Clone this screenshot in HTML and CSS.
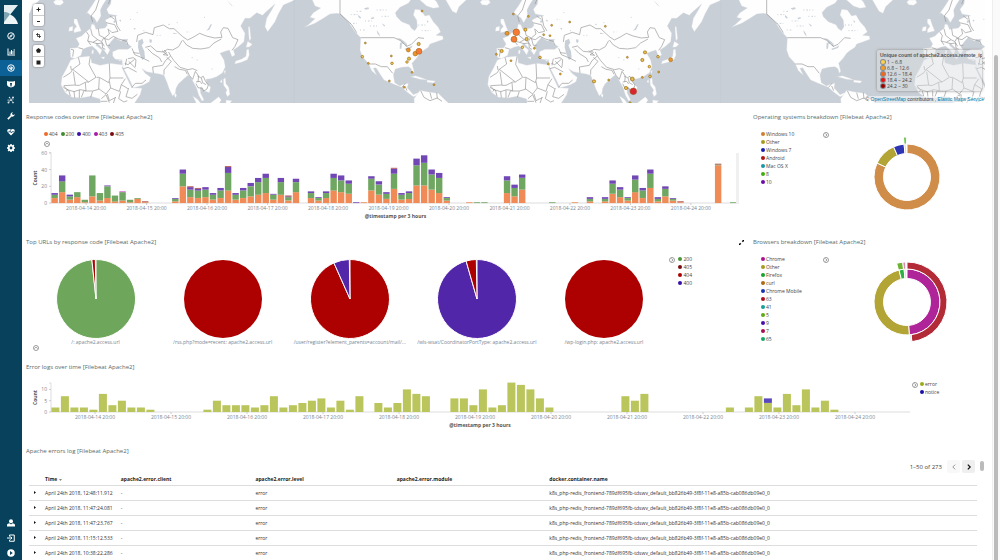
FILE: index.html
```html
<!DOCTYPE html>
<html lang="en">
<head>
<meta charset="utf-8">
<title>Filebeat Apache2 Dashboard</title>
<link rel="stylesheet" href="styles.css">
</head>
<body>
<div class="app">
  <nav class="sidebar" aria-label="Main">
    <div class="nav-top">
      <a class="logo" href="#" aria-label="Kibana"><svg viewBox="0 0 14 19"><path fill="#9fc0c5" d="M0 0v17L13.500 0z"/><path fill="#e4eef0" d="M0 0h14L0 17z"/><path fill="#b7d0d6" d="M0 7c5 0 9 4 12 11L0 19z"/><path fill="#7fa5b2" d="M0 7v10L6 9C4 7.500 2 7 0 7z"/><path fill="#eef5f6" d="M6 9.500L0 17.500V19h14C13 15 10 11 6 9.500z"/></svg></a>
      <a class="nav-item" href="#" aria-label="Discover"><svg viewBox="0 0 16 16"><circle cx="8" cy="8" r="6.500" fill="none" stroke="#fff" stroke-width="2"/><path d="M12 4L9.500 9.500 4 12l2.500-5.500z"/><circle cx="8" cy="8" r="1" fill="#07415c"/></svg></a>
      <a class="nav-item" href="#" aria-label="Visualize"><svg viewBox="0 0 16 16"><path d="M1 1h2v12h13v2H1zM5 7h2v5H5zM8 4h2v8H8zM11 6h1.500v6H11zM13.500 2H15v10h-1.500z"/></svg></a>
      <a class="nav-item active" href="#" aria-label="Dashboard"><svg viewBox="0 0 16 16"><circle cx="8" cy="8" r="6.500" fill="none" stroke="#fff" stroke-width="2"/><path d="M4 9a4 4 0 018 0h-2L6 5l2 5.500z"/><circle cx="8.500" cy="10" r="2"/></svg></a>
      <a class="nav-item" href="#" aria-label="Timelion"><svg viewBox="0 0 16 16"><path d="M0 2l4 1h8l4-1v7c0 3-4 5-8 6-4-1-8-3-8-6z"/><path fill="#07415c" d="M6 6h4l-1 7H7z"/></svg></a>
      <a class="nav-item" href="#" aria-label="Machine Learning"><svg viewBox="0 0 16 16" opacity=".85"><path d="M2 14L13 2M5 3l7 10M2 8l6 1 5-2" stroke="#fff" fill="none"/><circle cx="12" cy="3" r="2"/><circle cx="5" cy="3" r="1.500"/><circle cx="3" cy="13" r="2"/><circle cx="12" cy="13" r="1.700"/><circle cx="8" cy="8" r="1.700"/><circle cx="2" cy="8" r="1.200"/></svg></a>
      <a class="nav-item" href="#" aria-label="Dev Tools"><svg viewBox="0 0 16 16"><path d="M15.500 4a5 5 0 01-6.500 5l-6 6.500L.500 13 7 7a5 5 0 015-6.500L10 3l1 2.500 2.500.500z"/></svg></a>
      <a class="nav-item" href="#" aria-label="Monitoring"><svg viewBox="0 0 16 16"><path d="M8 15L1 8C-1 4 3 0 8 3.500 13 0 17 4 15 8z"/><path d="M1 8h4l1.500-3 2 5L10 7.500h5" stroke="#07415c" stroke-width="1.500" fill="none"/></svg></a>
      <a class="nav-item" href="#" aria-label="Management"><svg viewBox="0 0 16 16"><circle cx="8" cy="8" r="4.500" fill="none" stroke="#fff" stroke-width="3.500"/><path d="M8 0v16M0 8h16M2.300 2.300l11.400 11.400M13.700 2.300L2.300 13.700" stroke="#fff" stroke-width="3"/><circle cx="8" cy="8" r="2.800" fill="#07415c"/></svg></a>
    </div>
    <div class="nav-bottom">
      <a class="nav-item" href="#" aria-label="User"><svg viewBox="0 0 16 16"><circle cx="8" cy="4.500" r="4"/><path d="M0 15v-3c0-2 3-3 5-3.500L8 11l3-2.500c2 .500 5 1.500 5 3.500v3z"/></svg></a>
      <a class="nav-item" href="#" aria-label="Logout"><svg viewBox="0 0 16 16" fill="none" stroke="#fff" stroke-width="2"><path d="M5 5V2h9.500v12.500H5v-3M0 8h10M7 5l3 3-3 3"/></svg></a>
      <a class="nav-item" href="#" aria-label="Expand"><svg viewBox="0 0 16 16"><circle cx="8" cy="8" r="7.500"/><path fill="#07415c" d="M6 4l5.500 4L6 12z"/></svg></a>
    </div>
  </nav>

  <main class="content">
    <section class="map" aria-label="Unique IPs map">
      <svg class="world" viewBox="29 0 956 103" preserveAspectRatio="xMinYMin slice">
        <defs>
          <g id="earth">
            <g class="land">
              <path d="M212 172L210 145 232 143 238 132 228 115 245 108 258 95 272 85 275 72 283 74 288 88 315 84 322 76 316 60 335 50 352 47 326 42 320 28 332 12 334 -4 884 -4 880 2 850 15 835 42 825 65 803 95 795 80 800 55 815 30 825 12 795 38 788 46 770 38 750 55 735 55 722 78 735 100 732 125 715 140 700 150 705 165 696 170 688 150 672 155 660 160 665 168 672 180 676 200 668 218 650 230 632 236 618 238 620 250 632 262 628 278 612 272 606 262 600 262 602 280 612 300 606 303 596 285 590 265 582 250 572 232 565 225 550 238 535 252 528 265 526 280 518 288 508 268 500 245 492 226 478 222 455 218 440 215 426 206 436 220 452 232 448 245 430 255 400 264 390 242 376 215 368 200 366 180 346 178 338 168 338 155 355 148 384 148 395 140 378 128 384 118 368 118 365 124 352 118 345 112 334 124 322 140 330 150 322 165 312 150 300 138 290 128 288 136 306 150 300 165 290 150 276 138 262 142 248 148 243 166 225 176Z"/>
              <path d="M258 42l17-24 15-24 32 0-14 22-7 14 2 18-12 20-8-14-12-8-8-8z"/>
              <path d="M212 180l24-8 36-4 3 20 25 8 30-6 40 5-4 8 18 38 11 22 31 2-6 20-20 30-98 0-2-18-28-8-30 5-26-2-20-14-13-24 3-24 14-25z"/>
              <path d="M222 98l22-5-8-20-5-16-9 0 0 12 8 10-8 10zM206 94l12-2 1-13-11 3zM160 6l6 8 15 2 10-8-4-8-20 0zM302 172l12-2-2 8zM276 150l5 1-1 10-5 0zM355 180l12 0-8 3z"/>
              <path d="M704 192l3-9 18-6 13-8 2-20 6-2 2 18-6 14-18 8zM738 142l5-18 14 9-9 8zM745 80l4 0 4 36-5 6-2-20zM660 246l5-8 2 10zM672 214l5-3-2 12zM670 238l6-5 2 18 8 10 4 22-8 7-5-12 4-8-10-14zM525 279l5 6-3 8-4-6zM578 288l14 9 12 15-14 0zM628 312l28-22 8 10-7 12zM678 300l18 2-8 10-10 0z"/>
              <path d="M935 -4L945 18 962 24 940 38 930 52 945 56 925 74 914 82 945 70 970 55 990 42 1010 40 1022 42 1045 65 1065 95 1082 113 1080 150 1087 170 1105 190 1115 212 1130 226 1120 205 1128 203 1140 222 1152 240 1180 252 1205 262 1220 275 1240 290 1255 285 1262 275 1250 280 1240 284 1228 270 1222 264 1225 250 1210 253 1200 258 1184 248 1180 225 1186 207 1205 202 1225 200 1234 206 1238 220 1242 214 1236 190 1250 174 1260 160 1268 153 1285 142 1290 132 1310 125 1330 118 1328 108 1308 106 1322 96 1315 82 1300 65 1288 45 1275 48 1262 30 1245 28 1240 45 1250 60 1252 80 1244 92 1234 85 1228 74 1205 65 1190 50 1186 38 1200 22 1225 10 1235 -4Z"/>
              <path d="M1255 -4L1280 18 1300 25 1318 22 1310 5 1300 -4ZM1335 -4l22 38 12 6 8-20 26-24zM1232 230l15-3 22 8 13 5-22-2zM1281 240l25 3-5 6-20-2zM1243 312l-1-16 18-25 25 5 30 4 18 18 16 14z"/>
            </g>
            <g class="water">
              <path d="M415 122l12-6 4 12-6 8 8 18 2 20-8 6-8-18-5-20zM448 118l8 1-2 10-5-2zM618 92l6-5 8-14 4 0-8 16zM1190 114l12 2 16 12-10 4-6-10zM1200 128l6 0-2 18-5 0zM1212 128l8 2 2 12-6-4zM1214 146l14-4 10-6-4 8-18 6zM340 63l6-3 2 6-6 3zM357 60l6-1-1 7z"/>
              <path d="M1075 45l8 7-2 4-6-5zM1092 25l13-3 2 5-10 2zM1112 54l9-3 2 4-8 3zM1145 70l10 6-2 4zM1130 90l8 11 2 9-8-10zM505 72l5-1v3h-5zM680 0l17 17 8 5-12-6zM520 98l14 3-14 1zM400 84l7 1-2 5zM1280 60l6 5-4 3z"/>
            </g>
            <path class="specks" d="M1070 34h18M1052 44h25M1095 63h20M1110 78h25M1050 70h20M1080 90h14M1130 30h30M1145 49h26M1255 75h22M1265 92h28M390 58h10M410 38h6M430 92h9M470 106h12M530 68h8M560 96h10M612 52h7M635 207h8M575 173h6M590 180h5"/>
            <path class="borders" d="M1020 0v42l35 32 15 24M1082 113h100l18 8 20 18 14-6 20-20 18 2M1106 192l20 0 18 8 18 0 16 20M1206 262l10-12M1215 258l6 14M1262 272l10 20 18 10 22-8 14 10M1290 278l5 18M1310 278l2 18"/>
            <path class="borders" d="M259 95l8 12-4 16 16 4 14-8 12 6 5-10 16 4 14-10 16 8 24 7 4 10M272 86l5 20 16 13M295 86l3 20 16 8 14-12-4-16M318 68l26 6 10 20-18 4-10-10M345 47l6 30 10 16M330 48l14 10M264 123l8 12M279 127l12 4 16-2 6 10M306 126l2 18 8 4M314 114l6 22 10 0M213 148l8 2-3 20M235 143l14 4"/>
            <path class="borders" d="M278 66l-5-18 14-18 10-30M325 12l5-12M410 126l3-20 24-9 22 7 4-21 27-8 18 11 14 0 26 24 15 10 18-9 18-11 20 8 25 6 22-2-4-16 8-13 14 2 14 28 16 6-9 20-9 12M548 120l12 15 18 10 25 2 24-4 15-14 22-12M436 142l16-4 18 16 20 2 12-8 16 2 18-10 10-18M443 146l14 14 22 14 6 12M492 150l8 8-10 6 14 2-18-14M506 156l6 12-16 14-8 14-30 5 2 18M500 172l14 12-10 12-12 14 0 14M512 168l10 14 18 20 24 7 14-3 14 6M524 200l14 8 18 3 6 12M560 210l8 16 10 12 8-24 10 14-2 18M592 228l10 5 8-4 6 14 9 12-4 12-10 6-4-8-13-2-6-12M604 234l4 14 10 6M588 246l12-2 6 8"/>
            <path class="borders" d="M384 176l16-3 8 6-2 22M396 145l8 19 24 10 20 10M400 158l18 2M374 190l10 4 20-16M380 176l-4 20M370 206l14-4 26 14M396 262l10-12 20 0 12-10M386 184l20 20"/>
            <path class="borders" d="M235 172l5 20-22 16-6 10-22 14M214 210l-2-12M218 208l48 38 22-14-14-25-7-14 4-24M328 190l2 44 40 0M330 234l-4 14-28-16-8 0M220 215l6 40-34 2M226 256l12 0 20-10 8 0M256 248l2 24-18-3-18 6-20-6-12-12M298 234l-2 34-18 5-24 0M296 266l22 16 14-18-4-20M332 264l26 10 6-20 12-18M364 254l20 12M362 274l-6 22 16 10 10-4M386 264l-8 26 18 5 16-12M322 282l6 20 20-10M278 274l-6 18M252 272l-8 20M238 270v24M222 274l2 19M206 270l5 18M304 296l14-12 10 24M190 262l13 8M302 304h20M340 310l6-18M198 275l6-8"/>
            <path class="dateline" d="M882 0v310"/>
          </g>
        </defs>
        <rect class="sea" x="0" y="0" width="2000" height="600"/>
        <g transform="scale(.333333)">
          <use href="#earth" x="-1280"/><use href="#earth"/><use href="#earth" x="1280"/><use href="#earth" x="2560"/>
        </g>
        <g id="markers" transform="translate(330 0) scale(.333333)"></g>
      </svg>
      <div class="map-tools">
        <div class="tool-group"><button aria-label="Zoom in"><svg viewBox="0 0 10 10"><path d="M4 1h2v3h3v2H6v3H4V6H1V4h3z"/></svg></button><button aria-label="Zoom out"><svg viewBox="0 0 10 10"><path d="M2 4h6v2H2z"/></svg></button></div>
        <div class="tool-group"><button aria-label="Fit bounds"><svg viewBox="0 0 10 10" fill="none" stroke="#222" stroke-width="1.500"><path d="M3 0v7h7M0 3h7v7"/></svg></button></div>
        <div class="tool-group"><button aria-label="Draw polygon"><svg viewBox="0 0 10 10"><path d="M5 0l5 4-2 5.500H2L0 4z"/></svg></button><button aria-label="Draw rectangle"><svg viewBox="0 0 10 10"><path d="M1 1h8v8H1z"/></svg></button></div>
      </div>
      <div class="map-legend">
        <strong>Unique count of apache2.access.remote_ip</strong>
        <ul>
          <li class="c-yellow">1 – 6.8</li><li class="c-amber">6.8 – 12.6</li><li class="c-orange">12.6 – 18.4</li><li class="c-red">18.4 – 24.2</li><li class="c-dark">24.2 – 30</li>
        </ul>
      </div>
      <p class="attribution">© <a href="#">OpenStreetMap</a> contributors , <a href="#">Elastic Maps Service</a></p>
    </section>

    <div class="row split">
      <section class="panel">
        <h2>Response codes over time [Filebeat Apache2]</h2>
        <ul class="legend inline" data-legend="404:#ee6a2c,200:#3e8e2f,400:#3b0fa8,403:#a81ca8,405:#7d0a10"></ul>
        <button class="toggle below" aria-label="Toggle legend"><svg viewBox="0 0 10 10"><use href="#chev-up"/></svg></button>
        <svg class="chart" id="responses" viewBox="22 149 726 72"></svg>
      </section>
      <section class="panel">
        <h2>Operating systems breakdown [Filebeat Apache2]</h2>
        <div class="donut-body">
          <ul class="legend" data-legend="Windows 10:#cd7f32,Other:#a99a1c,Windows 7:#131fb0,Android:#b01515,Mac OS X:#1796a8,8:#3fae12,10:#6a0da8"></ul>
          <button class="toggle" aria-label="Toggle legend"><svg viewBox="0 0 10 10"><use href="#chev-right"/></svg></button>
          <svg class="donut" id="os" viewBox="-41 -41 82 82"></svg>
        </div>
      </section>
    </div>

    <div class="row split">
      <section class="panel">
        <h2>Top URLs by response code [Filebeat Apache2]</h2>
        <button class="expand" aria-label="Expand panel"><svg viewBox="0 0 10 10"><path d="M6 0h4v4L8.500 2.500l-2 2-1-1 2-2zM4 10H0V6l1.500 1.500 2-2 1 1-2 2z"/></svg></button>
        <div class="pie-body">
          <div class="pies" id="pies"></div>
          <button class="toggle" aria-label="Toggle legend"><svg viewBox="0 0 10 10"><use href="#chev-right"/></svg></button>
          <ul class="legend" data-legend="200:#4a9636,405:#7d0a10,404:#ad0000,400:#3b0fa8"></ul>
        </div>
        <button class="toggle corner" aria-label="Toggle table"><svg viewBox="0 0 10 10"><use href="#chev-up"/></svg></button>
      </section>
      <section class="panel">
        <h2>Browsers breakdown [Filebeat Apache2]</h2>
        <div class="donut-body">
          <ul class="legend" data-legend="Chrome:#aa1090,Other:#a99a1c,Firefox:#14a52a,curl:#b06a10,Chrome Mobile:#1135b0,63:#a8101f,41:#14a098,5:#5cab12,9:#4a0da8,7:#a80d52,65:#12a862"></ul>
          <button class="toggle" aria-label="Toggle legend"><svg viewBox="0 0 10 10"><use href="#chev-right"/></svg></button>
          <svg class="donut" id="browsers" viewBox="-41 -41 82 82"></svg>
        </div>
      </section>
    </div>

    <section class="row panel errors">
      <h2>Error logs over time [Filebeat Apache2]</h2>
      <div class="error-body">
        <svg class="chart" id="errors" viewBox="22 378 890 54"></svg>
        <button class="toggle" aria-label="Toggle legend"><svg viewBox="0 0 10 10"><use href="#chev-right"/></svg></button>
        <ul class="legend" data-legend="error:#9dab1a,notice:#1a0fa8"></ul>
      </div>
    </section>

    <section class="panel log">
      <h2>Apache errors log [Filebeat Apache2]</h2>
      <div class="pager"><span>1–50 of 273</span><button disabled aria-label="Previous page"><svg viewBox="0 0 10 10"><path d="M7 1L3 5l4 4"/></svg></button><button aria-label="Next page"><svg viewBox="0 0 10 10"><path d="M3 1l4 4-4 4"/></svg></button><i class="inner-thumb"></i></div>
      <table>
        <colgroup><col class="w-caret"><col class="w-time"><col class="w-client"><col class="w-level"><col class="w-module"><col></colgroup>
        <thead><tr><th></th><th>Time <svg class="sort" viewBox="0 0 10 6"><path d="M0 0h10L5 6z"/></svg></th><th>apache2.error.client</th><th>apache2.error.level</th><th>apache2.error.module</th><th>docker.container.name</th></tr></thead>
        <tbody id="rows"></tbody>
      </table>
    </section>
  </main>
  <div class="scrollbar"><i></i></div>
</div>
<svg class="defs" aria-hidden="true">
  <g id="chev-up"><circle cx="5" cy="5" r="4.200" fill="none" stroke="#777" stroke-width="1.200"/><path d="M2.500 6L5 3.500 7.500 6" fill="none" stroke="#777" stroke-width="1.200"/></g>
  <g id="chev-right"><circle cx="5" cy="5" r="4.200" fill="none" stroke="#777" stroke-width="1.200"/><path d="M4 2.500L6.500 5 4 7.500" fill="none" stroke="#777" stroke-width="1.200"/></g>
</svg>
<script src="charts.js"></script>
</body>
</html>
```
FILE: styles.css
```css
* { box-sizing: border-box; margin: 0; padding: 0; }
body { font-family: "Open Sans", "Noto Sans", sans-serif; font-size: 5px; line-height: 8px; color: #444; background: #fff; }
button { border: 0; background: none; font: inherit; cursor: pointer; }
ul { list-style: none; }
svg { display: block; }
.defs { position: absolute; width: 0; height: 0; }
.app { display: flex; height: 100vh; overflow: hidden; }

.sidebar { width: 22px; flex: none; background: #07415c; display: flex; flex-direction: column; justify-content: space-between; }
.logo { display: block; padding: 5px 4px 0; height: 28px; }
.logo svg { width: 14px; height: 19px; }
.nav-item { display: flex; align-items: center; justify-content: center; height: 16px; }
.nav-item svg { width: 8px; height: 8px; fill: #fff; }
.nav-item.active { background: #0c6296; }
.nav-bottom .nav-item { height: 15px; }
.nav-bottom .nav-item:nth-child(2) svg { fill: none; }

.content { flex: 1; min-width: 0; }
.scrollbar { width: 8px; flex: none; border-left: 1px solid #eee; background: #fafafa; padding: 55px 2px 0 1px; }
.scrollbar i { display: block; height: 100%; border-radius: 2px 2px 0 0; background: #bbb; }

.map { position: relative; height: 103px; margin: 0 7px; overflow: hidden; }
.world { width: 100%; height: 100%; }
.sea { fill: #c9cfd6; }
.land { fill: #fefefe; stroke: #d8dce1; stroke-width: 1; }
.water { fill: #c8cfd7; }
.specks { fill: none; stroke: #ccd2d9; stroke-width: 3; stroke-dasharray: 3 6 5 4; }
.borders { fill: none; stroke: #959595; stroke-width: 2; stroke-linejoin: round; }
.dateline { stroke: #bcc4cd; stroke-width: 1; }
.map-tools { position: absolute; left: 4px; top: 4px; display: grid; gap: 4px; }
.tool-group { width: 11px; background: #fff; border-radius: 2px; box-shadow: 0 0 2px #666; }
.tool-group button { display: flex; width: 11px; height: 11px; align-items: center; justify-content: center; }
.tool-group button + button { border-top: 1px solid #ccc; }
.tool-group svg { width: 5px; height: 5px; fill: #222; }
.tool-group svg[fill="none"] { fill: none; }
.map-legend { position: absolute; right: 3px; top: 50px; width: 105px; padding: 2px 3px; border-radius: 2px; background: rgba(220, 222, 226, .45); box-shadow: 0 0 3px #888; line-height: 6px; white-space: nowrap; overflow: hidden; color: #444; }
.map-legend strong { display: block; font-family: "Liberation Sans", sans-serif; font-weight: 700; line-height: 7px; color: #555; }
.map-legend li { display: flex; align-items: center; gap: 2px; }
.map-legend li::before { content: ""; width: 4px; height: 4px; border-radius: 50%; background: var(--dot); box-shadow: 0 0 0 1px rgba(0, 0, 0, .35); margin-left: 1px; }
.c-yellow { --dot: #fdd14a; }
.c-amber { --dot: #f89a24; }
.c-orange { --dot: #f4671a; }
.c-red { --dot: #ee1010; }
.c-dark { --dot: #9b0000; }
.attribution { position: absolute; right: 1px; bottom: 0; line-height: 7px; font-family: "Liberation Sans", sans-serif; color: #333; background: rgba(255, 255, 255, .5); }
.attribution a { color: #0078a8; text-decoration: none; }

.map + .row { margin-top: 5px; }
.split { display: grid; grid-template-columns: minmax(0, 727fr) minmax(0, 243fr); height: 125px; }
.panel { position: relative; padding: 4px 4px 0; }
.panel h2 { font-size: 6px; line-height: 10px; font-weight: 400; color: #566b6b; }
.legend { font-size: 5px; line-height: 8px; color: #444; white-space: nowrap; }
.legend li { display: flex; align-items: center; gap: 1px; line-height: 8px; }
.legend li i { width: 4px; height: 4px; border-radius: 50%; background: var(--dot); }
.legend.inline { display: flex; gap: 3px; margin: 8px 0 0 18px; }
.toggle { width: 6px; height: 6px; flex: none; }
.toggle svg { width: 6px; height: 6px; }
.toggle.below { display: block; margin: 3px 0 0 18px; }
.toggle.corner { position: absolute; left: 11px; bottom: 7px; }
.expand { position: absolute; right: 5px; top: 7px; width: 5px; height: 5px; }
.chart { width: 100%; }
#responses { margin: 2px -4px 0; width: calc(100% + 8px); }
.chart text { font-size: 5px; fill: #7a8590; }
.chart .axis-title { font-weight: 700; fill: #555; }
.donut-body { display: flex; padding: 8px 8px 0; align-items: flex-start; }
.donut-body .legend { width: 62px; }
.donut-body .toggle { margin-top: 2px; }
.donut { width: 82px; margin: 6px 0 0 37px; }
.donut path, .pies path { stroke: #fff; stroke-width: 1; }
.pie-body { display: flex; align-items: flex-start; padding: 4px 53px 0 6px; }
.pies { flex: 1; display: grid; grid-template-columns: repeat(5, minmax(0, 1fr)); }
.pies figure { display: grid; justify-items: center; padding-top: 8px; }
.pies svg { width: 80px; height: 80px; }
.pies figcaption { font-size: 5px; line-height: 6px; color: #7a8590; white-space: nowrap; }
.pie-body .toggle { margin: 6px 3px 0 2px; }
.pie-body .legend { margin-top: 4px; }
.errors { height: 84px; }
.error-body { display: flex; align-items: flex-start; margin: 6px 0 0 -4px; }
.error-body .chart { flex: 1; min-width: 0; }
.error-body .toggle { margin: 4px 2px 0 0; }
.error-body .legend { width: 68px; margin-top: 2px; }

.log { padding-right: 0; }
.pager { display: flex; align-items: center; justify-content: flex-end; gap: 2px; height: 13px; margin: 4px 8px 0 0; font-size: 6px; color: #444; }
.pager span { margin-right: 3px; }
.pager button { display: flex; align-items: center; justify-content: center; width: 13px; height: 13px; border-radius: 2px; background: #efefef; }
.pager button:disabled { background: #f8f8f8; }
.pager svg { width: 6px; height: 6px; fill: none; stroke: #111; stroke-width: 2; }
.pager button:disabled svg { stroke: #555; stroke-width: 1; }
.inner-thumb { width: 4px; height: 10px; margin: -2px 0 0 3px; border-radius: 2px; background: #bbb; }
table { width: calc(100% - 18px); margin-left: 3px; table-layout: fixed; border-collapse: collapse; font-size: 5px; }
.w-caret { width: 16px; }
.w-time { width: 8%; }
.w-client { width: 14.2%; }
.w-level { width: 14.9%; }
.w-module { width: 16.1%; }
th { height: 12px; text-align: left; font-weight: 700; color: #222; border-bottom: 1px solid #ddd; vertical-align: middle; white-space: nowrap; }
td { height: 15px; border-bottom: 1px solid #ddd; color: #333; white-space: nowrap; vertical-align: middle; }
td:first-child { padding-left: 5px; }
.sort { display: inline-block; width: 3px; height: 2px; fill: #888; }
.caret { display: block; width: 2px; height: 3px; }
.caret svg { width: 2px; height: 3px; fill: #111; }
```
FILE: charts.js
```js
const el = (html, parent) => parent.insertAdjacentHTML('beforeend', html);

document.querySelectorAll('[data-legend]').forEach(list => {
  list.dataset.legend.split(',').forEach(entry => {
    const [label, color] = entry.split(':');
    el(`<li><i style="--dot:${color}"></i>${label}</li>`, list);
  });
});

/* Stacked histogram: data maps a time slot to the values of each series. */
function histogram(svg, o) {
  let s = '';
  s += `<path d="M${o.x - 2} ${o.top}h2V${o.base}H${o.end}" fill="none" stroke="#ddd"/>`;
  o.ticks.forEach(t => {
    const y = o.base - t * o.unit;
    s += `<path d="M${o.x - 2} ${y}h2" stroke="#ccc"/><text x="${o.x - 4}" y="${y + 2}" text-anchor="end">${t}</text>`;
  });
  for (const slot in o.data) {
    let y = o.base;
    o.data[slot].forEach((v, i) => {
      if (!v) return;
      const h = v * o.unit;
      y -= h;
      s += `<rect x="${(o.x + .4 + slot * o.pitch).toFixed(1)}" y="${y.toFixed(1)}" width="${o.bar}" height="${h.toFixed(1)}" fill="${o.colors[i]}"/>`;
    });
  }
  for (let d = 0; d < 11; d++) {
    s += `<path d="M${o.label + d * o.step} ${o.base}v2" stroke="#ccc"/><text x="${o.label + d * o.step}" y="${o.base + 7}" text-anchor="middle">2018-04-${14 + d} 20:00</text>`;
  }
  s += `<text class="axis-title" text-anchor="middle" transform="translate(37 ${(o.top + o.base) / 2}) rotate(-90)">Count</text>`;
  s += `<text class="axis-title" text-anchor="middle" x="${o.titleX}" y="${o.base + 15}">@timestamp per 3 hours</text>`;
  svg.innerHTML = s;
}

histogram(document.getElementById('responses'), {
  x: 51, end: 738, top: 153, base: 203, unit: .837, pitch: 7.53, bar: 6.4, ticks: [0, 20, 40, 60],
  label: 86, step: 60.4, titleX: 395,
  colors: ['#f08b57', '#6fa661', '#7147b5', '#d050c8', '#a8423f'],
  data: {
    0: [6,4,2], 1: [13,13,7], 2: [4,4,2], 3: [7,6], 4: [1,3], 5: [8,25], 6: [3,9], 7: [6,14,1], 8: [2,7], 9: [3,10,0,1], 10: [1,3], 11: [5,1], 12: [1,0,0,0,1],
    16: [2,3,1], 17: [20,15,5], 18: [7,9,3,0,1], 19: [6,9,2,0,1], 20: [7,9,3], 21: [4,6,2], 22: [6,9,3], 23: [15,21,7,0,1], 24: [4,6,2], 25: [6,9,3], 26: [8,12,4], 27: [10,15,5], 28: [12,18,5], 29: [4,6,1], 30: [10,15,5], 31: [3,4,1,0,1], 32: [13,12,4],
    34: [6,6,2], 35: [3,3,1], 36: [6,6,2], 37: [15,15,5], 38: [13,14,6], 39: [11,12,4], 40: [0,0,1], 41: [1], 42: [15,14,3], 43: [10,12,4], 44: [5,6,2], 45: [17,18,6,0,1], 46: [4,6,2], 47: [5,7,2], 48: [21,24,8], 49: [21,27,9], 50: [16,18,6], 51: [12,18,6], 52: [3,3,1],
    55: [1], 56: [0,1], 57: [0,1], 60: [12,15,5], 61: [8,10,4], 62: [16,14,4], 66: [0,1], 69: [1], 71: [2,3,2], 73: [2,3,2], 74: [11,12,4], 75: [7,9,3], 76: [3,3,1], 77: [13,15,5], 78: [6,9,3], 79: [18,17,5], 80: [2,3,2], 81: [8,9,3], 82: [3,2,1], 83: [1,0,0,0,1], 88: [45,1,0,0,1], 90: [0,1]
  }
});
el('<rect x="735" y="153" width="3" height="50" fill="#f0f0f0"/>', document.getElementById('responses'));

histogram(document.getElementById('errors'), {
  x: 51, end: 910, top: 383, base: 412, unit: 2.26, pitch: 9.5, bar: 8, ticks: [0, 5, 10],
  label: 95, step: 76, titleX: 480,
  colors: ['#bac55c', '#5a48bd'],
  data: {
    0: [2], 1: [7], 2: [2], 3: [2], 4: [1], 5: [8], 6: [3], 7: [5], 8: [2], 9: [2], 10: [1],
    16: [1], 17: [5], 18: [3], 19: [3], 20: [3], 21: [2], 22: [3], 23: [7], 24: [2], 25: [3], 26: [4], 27: [5], 28: [6], 29: [2], 30: [5], 31: [1], 32: [7],
    34: [4], 35: [2], 36: [4], 37: [10], 38: [8], 39: [7], 42: [6], 43: [6], 44: [3], 45: [10], 46: [2], 47: [3], 48: [13], 49: [12], 50: [10], 51: [6], 52: [2],
    60: [7], 61: [5], 62: [8], 71: [2], 73: [2], 74: [7], 75: [4,2], 76: [2], 77: [8], 78: [3], 79: [10], 80: [2], 81: [5], 82: [1]
  }
});

/* Ring segment between two angles, in degrees clockwise from the top. */
function arc(a, b, inner, outer, color) {
  const p = (deg, r) => {
    const t = (deg - 90) * Math.PI / 180;
    return `${(r * Math.cos(t)).toFixed(2)} ${(r * Math.sin(t)).toFixed(2)}`;
  };
  const big = b - a > 180 ? 1 : 0;
  return `<path fill="${color}" d="M${p(a, outer)}A${outer} ${outer} 0 ${big} 1 ${p(b, outer)}L${p(b, inner)}A${inner} ${inner} 0 ${big} 0 ${p(a, inner)}Z"/>`;
}

document.getElementById('os').innerHTML =
  arc(0, 295, 23.5, 33, '#d08d49') + arc(295, 336, 23.5, 33, '#b3a436') + arc(336, 355, 23.5, 33, '#2e35b3') + arc(355, 358, 23.5, 33, '#e3aaa6') + arc(355, 359, 33, 40, '#62bd42');
document.getElementById('browsers').innerHTML =
  arc(0, 176, 23.5, 33, '#b0249a') + arc(176, 346, 23.5, 33, '#b3a436') + arc(346, 355, 23.5, 33, '#2eb045') + arc(355, 358, 23.5, 33, '#e8c9a0') +
  arc(0, 173, 33, 40, '#b22b37') + arc(173, 175, 33, 40, '#9bd8d3') + arc(345, 354, 33, 40, '#6eb333') + arc(354, 358, 33, 40, '#dc8ab0');

const RED = '#ad0000', VIOLET = '#5226a8';
[
  ['/: apache2.access.url', '#6ea65b', 354, RED],
  ['/rss.php?mode=recent: apache2.access.url', RED, 360],
  ['/user/register?element_parents=account/mail/...', RED, 336, VIOLET],
  ['/wls-wsat/CoordinatorPortType: apache2.access.url', VIOLET, 344, RED],
  ['/wp-login.php: apache2.access.url', RED, 360]
].forEach(([name, main, end, rest]) => {
  const shape = rest ? arc(0, end, 0, 39.5, main) + arc(end, 359, 0, 39.5, rest) : `<circle r="39" fill="${main}"/>`;
  el(`<figure><svg viewBox="-40 -40 80 80">${shape}</svg><figcaption>${name}</figcaption></figure>`, document.getElementById('pies'));
});

/* Map circles: x, y, radius, level. */
const LEVELS = ['#d9a92c', '#ee9426', '#f47a35', '#dc2430'];
document.getElementById('markers').innerHTML = [
  [106,129,3,0],[97,170,4,0],[115,190,3,0],[184,168,3,0],[186,190,4,0],[235,150,6,1],[266,132,5,0],[256,161,7,1],[267,154,9,2],[237,176,5,0],[231,186,4,0],[246,217,3,0],[178,243,3,0],[222,262,3,0],[312,254,3,0],[276,33,3,0],
  [531,100,6,1],[559,97,10,2],[552,118,9,2],[586,89,5,0],[590,117,5,0],[577,142,4,0],[515,153,5,0],[499,163,3,0],[543,182,3,0],[550,42,3,0],[595,49,3,0],[641,104,3,0],[660,107,3,0],[665,76,3,0],[719,66,3,0],[826,79,3,0],[613,145,3,0],[630,172,4,0],[655,192,3,0],[691,222,3,0],[792,244,5,0],[836,240,3,0],[892,172,3,0],[945,157,5,0],[937,180,5,0],[958,200,4,0],[984,170,4,0],[986,216,3,0],[960,229,4,0],[937,232,3,0],[907,237,6,0],[888,264,5,0],[910,274,10,3],[900,308,3,0],[1022,179,6,1]
].map(([x, y, r, l]) => `<circle cx="${x}" cy="${y}" r="${r}" fill="${LEVELS[l]}" stroke="#8a5a10" stroke-opacity=".7" stroke-width="2"/>` + (l === 0 && r > 3 ? `<circle cx="${x}" cy="${y}" r="1.500" fill="#fff3b0"/>` : '')).join('');

const container = 'k8s_php-redis_frontend-789df695fb-tdswv_default_bb826b49-3f8f-11e8-a85b-cab086db09e0_0';
['12:48:11.912', '11:47:24.081', '11:47:23.767', '11:15:12.533', '10:38:22.286'].forEach(time =>
  el(`<tr><td><button class="caret" aria-label="Expand row"><svg viewBox="0 0 2 3"><path d="M0 0l2 1.500L0 3z"/></svg></button></td><td>April 24th 2018, ${time}</td><td>-</td><td>error</td><td></td><td>${container}</td></tr>`, document.getElementById('rows')));
```
